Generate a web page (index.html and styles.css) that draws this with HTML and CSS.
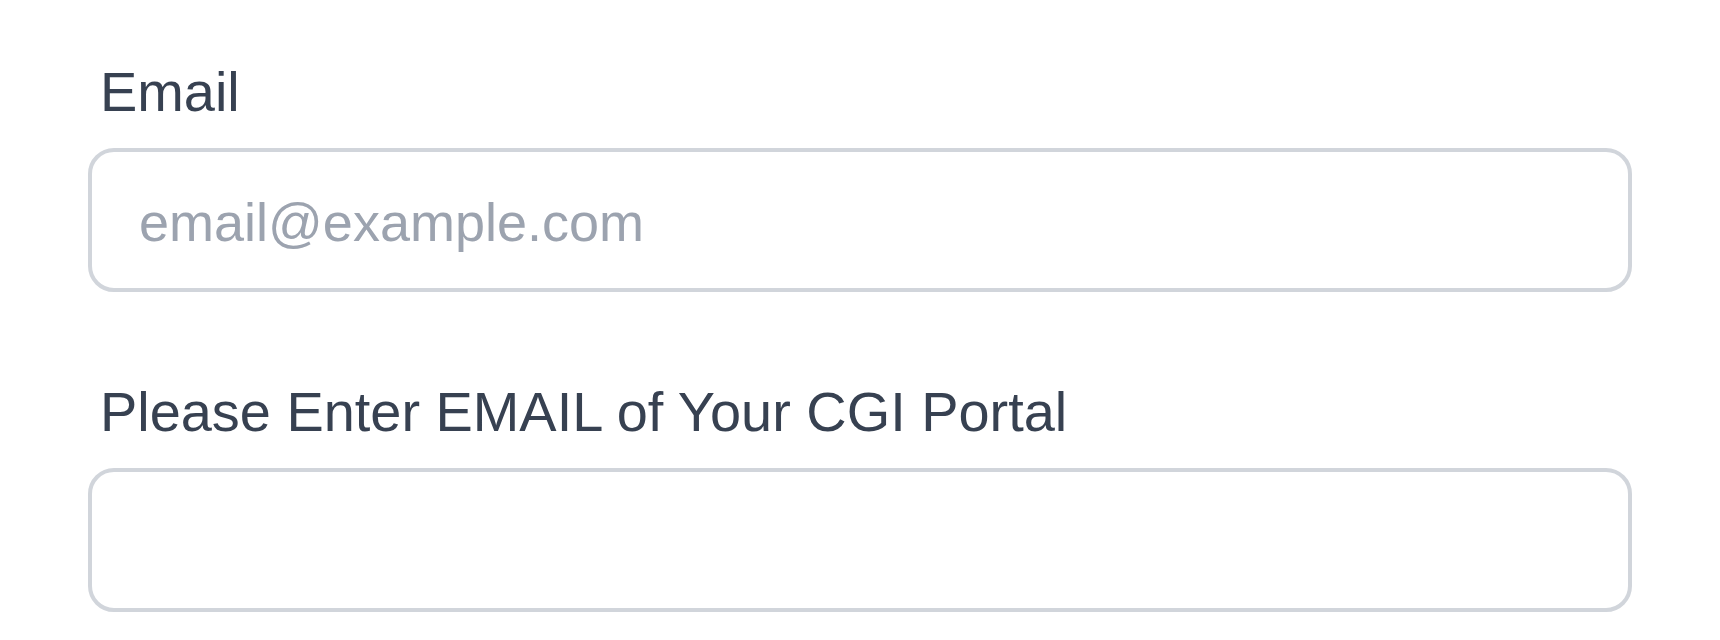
FILE: index.html
```html
<!DOCTYPE html>
<html lang="en">
<head>
<meta charset="utf-8">
<title>Form</title>
<link rel="stylesheet" href="styles.css">
</head>
<body>
<form class="form">
  <div class="field">
    <label class="label" for="email">Email</label>
    <input class="input" id="email" type="email" placeholder="email@example.com">
  </div>
  <div class="field">
    <label class="label" for="portal">Please Enter EMAIL of Your CGI Portal</label>
    <input class="input" id="portal" type="text">
  </div>
</form>
</body>
</html>
```

FILE: styles.css
```css
* { box-sizing: border-box; }
html, body {
  margin: 0;
  padding: 0;
  background: #ffffff;
}
body {
  font-family: "Liberation Sans", Arial, sans-serif;
}
.form {
  display: flex;
  flex-direction: column;
  gap: 79px;
  padding: 51px 88px 0 88px;
}
.field {
  display: flex;
  flex-direction: column;
  gap: 16px;
}
.label {
  display: block;
  font-size: 55.9px;
  line-height: 81px;
  color: #374151;
  padding-left: 12px;
}
.input {
  display: block;
  width: 100%;
  height: 144px;
  border: 4px solid #d1d5db;
  border-radius: 26px;
  padding: 29px 47px 25px 47px;
  font-family: "Liberation Sans", Arial, sans-serif;
  font-size: 54px;
  line-height: 81px;
  color: #374151;
  background: #ffffff;
  outline: none;
  margin: 0;
}
.input::placeholder {
  color: #9ca3af;
  opacity: 1;
}
```
